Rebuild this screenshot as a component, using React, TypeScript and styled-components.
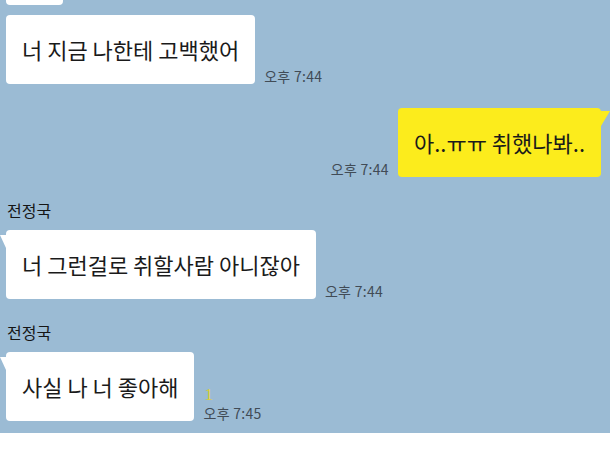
import React from "react";
import styled, { createGlobalStyle, css } from "styled-components";

const Global = createGlobalStyle`
  html, body { margin: 0; padding: 0; background: #ffffff; }
  #root { width: 610px; height: 457px; overflow: hidden; }
`;

const FONT = `"Noto Sans CJK KR", "Noto Sans", sans-serif`;

const Screen = styled.div`
  display: flex;
  flex-direction: column;
  width: 610px;
  height: 457px;
  font-family: ${FONT};
`;

const ChatArea = styled.div`
  flex: 1;
  background: #9bbbd4;
  overflow: hidden;
  display: flex;
  flex-direction: column;
  padding: 0 9px 0 6px;
`;

const InputArea = styled.div`
  height: 24px;
  background: #ffffff;
`;

const Row = styled.div<{ $mine?: boolean; $gap: number }>`
  display: flex;
  flex-direction: ${(p) => (p.$mine ? "row-reverse" : "row")};
  align-items: flex-end;
  margin-top: ${(p) => p.$gap}px;
  gap: 9px;
`;

const Group = styled.div<{ $gap: number }>`
  display: flex;
  flex-direction: column;
  margin-top: ${(p) => p.$gap}px;
`;

const Name = styled.div`
  font-size: 16px;
  line-height: 20px;
  height: 20px;
  color: #151515;
  padding-left: 1px;
  margin-bottom: 10px;
`;

const PartialBubble = styled.div`
  width: 57px;
  height: 70px;
  background: #ffffff;
  border-radius: 4px;
`;

const Bubble = styled.div<{ $mine?: boolean; $tail?: boolean }>`
  position: relative;
  background: ${(p) => (p.$mine ? "#fcec1c" : "#ffffff")};
  border-radius: 4px;
  padding: 21px 16px 21px 16px;
  font-size: 22px;
  line-height: 27px;
  color: #1a1a1a;
  white-space: nowrap;
  ${(p) =>
    p.$tail &&
    (p.$mine
      ? css`
          &::after {
            content: "";
            position: absolute;
            top: 3px;
            right: -9px;
            border-left: 9px solid #fcec1c;
            border-bottom: 15px solid transparent;
          }
        `
      : css`
          &::before {
            content: "";
            position: absolute;
            top: 5px;
            left: -6px;
            border-right: 6px solid #ffffff;
            border-bottom: 13px solid transparent;
          }
        `)}
`;

const Meta = styled.div`
  display: flex;
  flex-direction: column;
  align-items: flex-start;
`;

const Unread = styled.div`
  font-family: "Liberation Serif", serif;
  font-size: 17px;
  line-height: 16px;
  color: #dccf34;
  margin-bottom: 3px;
  padding-left: 1px;
`;

const Time = styled.div`
  font-size: 14px;
  line-height: 15px;
  color: #414b56;
  white-space: nowrap;
  letter-spacing: 0.3px;
`;

export default function App() {
  return (
    <>
      <Global />
      <Screen>
        <ChatArea>
          <Row $gap={-65}>
            <PartialBubble />
          </Row>
          <Row $gap={10}>
            <Bubble>너 지금 나한테 고백했어</Bubble>
            <Meta>
              <Time>오후 7:44</Time>
            </Meta>
          </Row>
          <Row $mine $gap={24}>
            <Bubble $mine $tail>
              아..ㅠㅠ 취했나봐..
            </Bubble>
            <Meta>
              <Time>오후 7:44</Time>
            </Meta>
          </Row>
          <Group $gap={23}>
            <Name>전정국</Name>
            <Row $gap={0}>
              <Bubble $tail>너 그런걸로 취할사람 아니잖아</Bubble>
              <Meta>
                <Time>오후 7:44</Time>
              </Meta>
            </Row>
          </Group>
          <Group $gap={23}>
            <Name>전정국</Name>
            <Row $gap={0}>
              <Bubble $tail>사실 나 너 좋아해</Bubble>
              <Meta>
                <Unread>1</Unread>
                <Time>오후 7:45</Time>
              </Meta>
            </Row>
          </Group>
        </ChatArea>
        <InputArea />
      </Screen>
    </>
  );
}
